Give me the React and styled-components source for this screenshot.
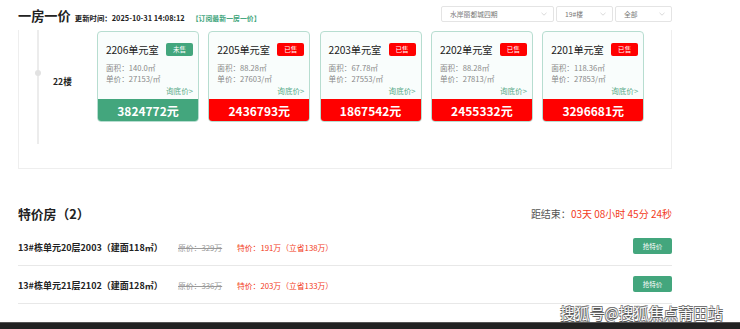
import React from "react";
import styled, { createGlobalStyle } from "styled-components";

const Global = createGlobalStyle`
  html, body { margin: 0; padding: 0; background: #fff; }
  body { font-family: "Noto Sans CJK SC", "Noto Sans", sans-serif; color: #333; }
  * { box-sizing: border-box; }
`;

const GREEN = "#43a67d";
const RED = "#ff0000";

const Page = styled.div`
  position: relative;
  width: 740px;
  height: 329px;
  overflow: hidden;
  display: flex;
  flex-direction: column;
`;

const Header = styled.div`
  height: 30px;
  padding: 0 68px 0 18px;
  display: flex;
  justify-content: space-between;
  align-items: flex-start;
`;

const TitleGroup = styled.div`
  display: flex;
  align-items: baseline;
  margin-top: 8px;
`;

const Title = styled.h1`
  margin: 0;
  font-size: 13.2px;
  line-height: 16px;
  font-weight: 700;
  color: #222;
`;

const Updated = styled.span`
  margin-left: 4px;
  font-size: 7.4px;
  font-weight: 700;
  color: #222;
`;

const Subscribe = styled.span`
  margin-left: 7px;
  font-size: 6.9px;
  font-weight: 700;
  color: ${GREEN};
`;

const Selects = styled.div`
  display: flex;
  gap: 2.5px;
  margin-top: 6px;
`;

const Select = styled.div`
  width: ${(p) => p.$w}px;
  height: 15.5px;
  border: 1px solid #e4e4e4;
  border-radius: 2px;
  display: flex;
  align-items: center;
  justify-content: space-between;
  padding: 0 6px 0 8px;
  font-size: 6.8px;
  color: #777;
`;

const Chevron = () => (
  <svg width="6" height="4" viewBox="0 0 6 4">
    <path d="M0.5 0.8 L3 3.2 L5.5 0.8" fill="none" stroke="#c8c8c8" strokeWidth="0.7" />
  </svg>
);

const Panel = styled.div`
  margin: 0 68px 0 18px;
  border: 1px solid #eeeeee;
  border-top: none;
  padding: 0 0 24px 18px;
`;

const FloorBlock = styled.div`
  display: flex;
  height: 114px;
`;

const Timeline = styled.div`
  position: relative;
  width: 2px;
  background: #ececec;
  &::after {
    content: "";
    position: absolute;
    left: -2px;
    top: 40px;
    width: 6px;
    height: 6px;
    border-radius: 50%;
    background: #e2e2e2;
  }
`;

const FloorLabel = styled.div`
  width: 58px;
  padding: 45px 0 0 14px;
  font-size: 8.6px;
  line-height: 12px;
  font-weight: 700;
  color: #222;
`;

const Cards = styled.div`
  display: flex;
  gap: 9.3px;
  padding-top: 1px;
`;

const Card = styled.div`
  width: 102px;
  height: 91px;
  border: 1px solid #b7ddd0;
  border-radius: 4px;
  background: #f9fdfc;
  overflow: hidden;
  display: flex;
  flex-direction: column;
`;

const CardBody = styled.div`
  flex: 1;
  padding: 10px 5px 0 8px;
  display: flex;
  flex-direction: column;
`;

const CardHead = styled.div`
  display: flex;
  justify-content: space-between;
  align-items: center;
  height: 14px;
`;

const Room = styled.span`
  font-size: 10.2px;
  color: #222;
  letter-spacing: -0.1px;
`;

const Badge = styled.span`
  width: 27px;
  height: 13px;
  border-radius: 2px;
  background: ${(p) => (p.$sold ? RED : GREEN)};
  color: #fff;
  font-size: 6.6px;
  display: flex;
  align-items: center;
  justify-content: center;
`;

const Info = styled.div`
  margin-top: 6px;
  font-size: 7.6px;
  line-height: 11px;
  color: #888;
`;

const Ask = styled.div`
  margin-top: 1px;
  align-self: flex-end;
  font-size: 7.6px;
  line-height: 11px;
  color: #5aab8a;
`;

const PriceBar = styled.div`
  height: 22px;
  background: ${(p) => (p.$sold ? RED : GREEN)};
  color: #fff;
  font-size: 12px;
  font-weight: 700;
  display: flex;
  align-items: center;
  justify-content: center;
`;

const Special = styled.div`
  margin: 29px 68px 0 18px;
`;

const SpecialHead = styled.div`
  height: 30px;
  display: flex;
  justify-content: space-between;
  align-items: center;
`;

const SpecialTitle = styled.h2`
  margin: 0;
  font-size: 12.8px;
  font-weight: 700;
  color: #222;
`;

const Countdown = styled.div`
  font-size: 10px;
  color: #555;
  span { color: #f23b22; }
`;

const Row = styled.div`
  height: 38px;
  padding-top: 1px;
  border-bottom: 1px solid #e8e8e8;
  display: flex;
  align-items: center;
`;

const RowName = styled.span`
  width: 160px;
  font-size: 9px;
  font-weight: 700;
  color: #222;
`;

const Orig = styled.span`
  width: 59px;
  font-size: 7.8px;
  color: #999;
  text-decoration: line-through;
`;

const Deal = styled.span`
  flex: 1;
  font-size: 7.8px;
  color: #f23b22;
`;

const GrabButton = styled.button`
  width: 39px;
  height: 15.5px;
  border: none;
  border-radius: 2px;
  background: ${GREEN};
  color: #fff;
  font-family: inherit;
  font-size: 6.5px;
  padding: 0;
  margin-top: -2px;
`;

const Spacer = styled.div`
  flex: 1;
`;

const Footer = styled.div`
  height: 7px;
  background: #222;
  border-top: 1px solid #555;
`;

const Watermark = styled.div`
  position: absolute;
  right: 17px;
  bottom: 6px;
  font-size: 14.7px;
  color: #fafafa;
  letter-spacing: 0.2px;
  text-shadow: 0.6px 0.6px 0 #555, -0.6px -0.6px 0 #777, 0.6px -0.6px 0 #777, -0.6px 0.6px 0 #777;
`;

const units = [
  { room: "2206单元室", sold: false, area: "140.0㎡", unit: "27153/㎡", price: "3824772元" },
  { room: "2205单元室", sold: true, area: "88.28㎡", unit: "27603/㎡", price: "2436793元" },
  { room: "2203单元室", sold: true, area: "67.78㎡", unit: "27553/㎡", price: "1867542元" },
  { room: "2202单元室", sold: true, area: "88.28㎡", unit: "27813/㎡", price: "2455332元" },
  { room: "2201单元室", sold: true, area: "118.36㎡", unit: "27853/㎡", price: "3296681元" },
];

const deals = [
  { name: "13#栋单元20层2003（建面118㎡）", orig: "原价：329万", deal: "特价：191万（立省138万）" },
  { name: "13#栋单元21层2102（建面128㎡）", orig: "原价：336万", deal: "特价：203万（立省133万）" },
];

export default function App() {
  return (
    <Page>
      <Global />
      <Header>
        <TitleGroup>
          <Title>一房一价</Title>
          <Updated>更新时间：2025-10-31 14:08:12</Updated>
          <Subscribe>【订阅最新一房一价】</Subscribe>
        </TitleGroup>
        <Selects>
          <Select $w={112.5}>水岸丽都城四期<Chevron /></Select>
          <Select $w={56.5}>19#楼<Chevron /></Select>
          <Select $w={57}>全部<Chevron /></Select>
        </Selects>
      </Header>
      <Panel>
        <FloorBlock>
          <Timeline />
          <FloorLabel>22楼</FloorLabel>
          <Cards>
            {units.map((u) => (
              <Card key={u.room}>
                <CardBody>
                  <CardHead>
                    <Room>{u.room}</Room>
                    <Badge $sold={u.sold}>{u.sold ? "已售" : "未售"}</Badge>
                  </CardHead>
                  <Info>
                    <div>面积：{u.area}</div>
                    <div>单价：{u.unit}</div>
                  </Info>
                  <Ask>询底价&gt;</Ask>
                </CardBody>
                <PriceBar $sold={u.sold}>{u.price}</PriceBar>
              </Card>
            ))}
          </Cards>
        </FloorBlock>
      </Panel>
      <Special>
        <SpecialHead>
          <SpecialTitle>特价房（2）</SpecialTitle>
          <Countdown>距结束：<span>03天 08小时 45分 24秒</span></Countdown>
        </SpecialHead>
        {deals.map((d) => (
          <Row key={d.name}>
            <RowName>{d.name}</RowName>
            <Orig>{d.orig}</Orig>
            <Deal>{d.deal}</Deal>
            <GrabButton>抢特价</GrabButton>
          </Row>
        ))}
      </Special>
      <Spacer />
      <Footer />
      <Watermark>搜狐号@搜狐焦点莆田站</Watermark>
    </Page>
  );
}
